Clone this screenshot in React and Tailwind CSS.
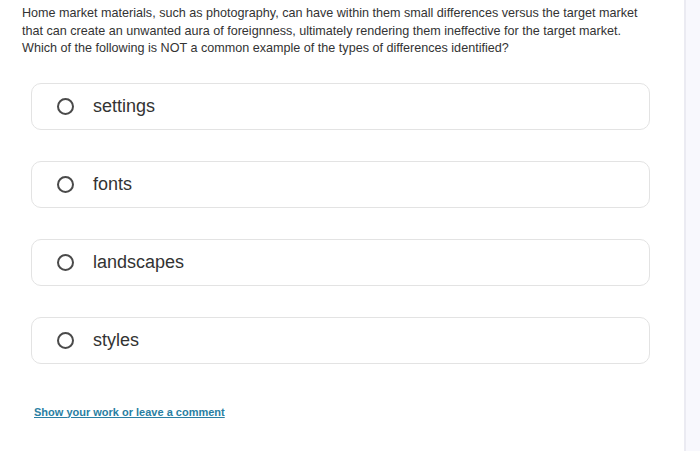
import React from 'react';

const options = ['settings', 'fonts', 'landscapes', 'styles'];

const App = () => {
  return (
    <div className="flex w-[700px] h-[451px] bg-white" style={{ fontFamily: '"Liberation Sans", Arial, sans-serif' }}>
      <div className="flex-1">
        <p className="pl-[22px] pt-[5px] text-[12.6px] leading-[17.5px] text-[#333] whitespace-nowrap">
          Home market materials, such as photography, can have within them small differences versus the target market
          <br />
          that can create an unwanted aura of foreignness, ultimately rendering them ineffective for the target market.
          <br />
          Which of the following is NOT a common example of the types of differences identified?
        </p>
        <div className="mt-[25px] ml-[31px] w-[619px] flex flex-col gap-[31px]">
          {options.map((opt) => (
            <div
              key={opt}
              className="h-[47px] rounded-[10px] border border-[#e3e3e3] flex items-center pl-[25px]"
            >
              <span className="w-[17px] h-[17px] rounded-full border-2 border-[#4a4a4a]" />
              <span className="ml-[19px] text-[18px] text-[#333]">{opt}</span>
            </div>
          ))}
        </div>
        <div className="mt-[35px] ml-[34px]">
          <a href="#" className="text-[11px] font-bold text-[#2a7fa3] underline">
            Show your work or leave a comment
          </a>
        </div>
      </div>
      <div className="w-[16px] border-l-2 border-[#ebebf2] bg-[#f8f8fd]" />
    </div>
  );
};

export default App;
